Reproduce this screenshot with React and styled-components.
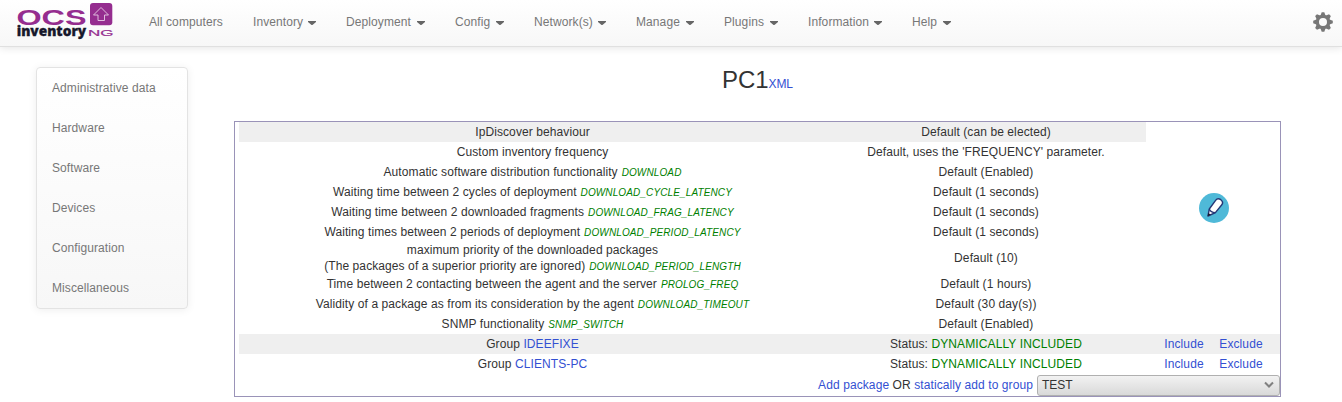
import React from 'react';
import styled, { createGlobalStyle } from 'styled-components';

const GlobalStyle = createGlobalStyle`
  * { box-sizing: border-box; }
  body {
    margin: 0;
    background: #fff;
    color: #333;
    font: 12px/16px "Liberation Sans", Arial, sans-serif;
    letter-spacing: 0.09px;
    overflow: hidden;
  }
  a { color: #3350d2; text-decoration: none; }
`;

const Header = styled.header`
  display: flex;
  align-items: flex-start;
  height: 47px;
  padding: 0 9px 0 16px;
  border-bottom: 1px solid #e0e0e0;
  background: linear-gradient(#fff, #f7f7f7);
  box-shadow: 0 1px 8px rgba(0, 0, 0, 0.11);
`;

const Logo = styled.svg`
  display: block;
  flex: none;
  width: 98px;
  height: 42px;
  margin-right: 20px;
  letter-spacing: 0;
`;

const Nav = styled.nav`
  display: flex;
  flex: 1;
`;

const NavItem = styled.a`
  display: flex;
  align-items: center;
  width: ${(p) => p.$width}px;
  height: 44px;
  padding-left: 15px;
  && { color: #777; }
  white-space: nowrap;
`;

const Caret = styled.span`
  width: 8px;
  height: 4px;
  margin: 2px 15px 0 auto;
  background: #666;
  clip-path: polygon(0 0, 100% 0, 100% 25%, 55% 100%, 45% 100%, 0 25%);
`;

const Gear = styled.svg`
  width: 20px;
  height: 20px;
  margin-top: 12px;
`;

const Page = styled.div`
  display: flex;
  align-items: flex-start;
  padding: 20px 61px 0 36px;
`;

const Sidebar = styled.aside`
  width: 152px;
  margin-right: 46px;
  border: 1px solid #e3e3e3;
  border-radius: 4px;
  background: linear-gradient(#fff, #f7f7f7);
  box-shadow: 0 1px 8px rgba(0, 0, 0, 0.07);
`;

const SideItem = styled.a`
  display: block;
  padding: 0 15px;
  line-height: 40px;
  && { color: #777; }
`;

const Main = styled.main`
  width: 1047px;
`;

const Title = styled.h1`
  display: flex;
  justify-content: center;
  align-items: baseline;
  height: 54px;
  margin: 0;
  font-size: 24px;
  font-weight: 400;
  line-height: 26px;
  letter-spacing: -0.1px;
  a { font-size: 12px; }
`;

const Panel = styled.section`
  display: grid;
  grid-template-columns: 587px 320px 76px 58px;
  grid-template-rows: repeat(6, 20px) 32px repeat(5, 20px) 22px;
  height: 276px;
  padding-left: 4px;
  border: 1px solid #9a93b8;
`;

const Cell = styled.div`
  grid-column: ${(p) => p.$col};
  grid-row: ${(p) => p.$row};
  display: flex;
  flex-direction: ${(p) => (p.$stacked ? 'column' : 'row')};
  align-items: center;
  justify-content: center;
  background: ${(p) => (p.$shaded ? '#efefef' : 'transparent')};
  text-align: center;
  white-space: nowrap;
`;

const EditCell = styled(Cell)`
  padding-left: 2px;
`;

const ExcludeCell = styled(Cell)`
  padding-right: 20px;
`;

const Label = styled.span`
  white-space: pre;
`;

const Option = styled.i`
  margin-left: 0.5px;
  color: #008000;
  font-size: 10px;
  line-height: 1;
  letter-spacing: 0.12px;
`;

const Status = styled.span`
  color: #008000;
  letter-spacing: 0.12px;
`;

const AddRow = styled.div`
  grid-column: 1 / -1;
  grid-row: 13;
  display: flex;
  align-items: center;
  justify-content: flex-end;
  gap: 4px;
`;

const Select = styled.button`
  display: flex;
  align-items: center;
  justify-content: space-between;
  width: 243px;
  height: 21px;
  padding: 0 5px 0 4px;
  border: 1px solid #b0b0b0;
  border-radius: 3px;
  background: linear-gradient(#f2f2f2, #d9d9d9);
  color: #333;
  font: inherit;
`;

const menu = [
  { text: 'All computers', width: 104, plain: true },
  { text: 'Inventory', width: 93 },
  { text: 'Deployment', width: 109 },
  { text: 'Config', width: 79 },
  { text: 'Network(s)', width: 102 },
  { text: 'Manage', width: 88 },
  { text: 'Plugins', width: 84 },
  { text: 'Information', width: 104 },
  { text: 'Help', width: 69 },
];

const sections = ['Administrative data', 'Hardware', 'Software', 'Devices', 'Configuration', 'Miscellaneous'];

const settings = [
  { lines: ['IpDiscover behaviour'], value: 'Default (can be elected)' },
  { lines: ['Custom inventory frequency'], value: "Default, uses the 'FREQUENCY' parameter." },
  { lines: ['Automatic software distribution functionality'], option: 'DOWNLOAD', value: 'Default (Enabled)' },
  { lines: ['Waiting time between 2 cycles of deployment'], option: 'DOWNLOAD_CYCLE_LATENCY', value: 'Default (1 seconds)' },
  { lines: ['Waiting time between 2 downloaded fragments'], option: 'DOWNLOAD_FRAG_LATENCY', value: 'Default (1 seconds)' },
  { lines: ['Waiting times between 2 periods of deployment'], option: 'DOWNLOAD_PERIOD_LATENCY', value: 'Default (1 seconds)' },
  {
    lines: ['maximum priority of the downloaded packages', '(The packages of a superior priority are ignored)'],
    option: 'DOWNLOAD_PERIOD_LENGTH',
    value: 'Default (10)',
  },
  { lines: ['Time between 2 contacting between the agent and the server'], option: 'PROLOG_FREQ', value: 'Default (1 hours)' },
  { lines: ['Validity of a package as from its consideration by the agent'], option: 'DOWNLOAD_TIMEOUT', value: 'Default (30 day(s))' },
  { lines: ['SNMP functionality'], option: 'SNMP_SWITCH', value: 'Default (Enabled)' },
];

const groups = ['IDEEFIXE', 'CLIENTS-PC'];

function OcsLogo() {
  return (
    <Logo viewBox="0 0 98 42">
      <text x="0.5" y="24.6" fontFamily="Liberation Sans" fontWeight="700" fontSize="21.5" fill="#952d8f" textLength="70" lengthAdjust="spacingAndGlyphs">OCS</text>
      <text x="0.7" y="36" fontFamily="Open Sans" fontWeight="800" fontSize="13.5" fill="#17182b" stroke="#17182b" strokeWidth=".3" textLength="69.5" lengthAdjust="spacingAndGlyphs">inventory</text>
      <text x="72" y="35.5" fontFamily="Liberation Sans" fontSize="9.5" fill="#952d8f" stroke="#952d8f" strokeWidth=".2" textLength="25.5" lengthAdjust="spacingAndGlyphs">NG</text>
      <rect x="74" y="3" width="22.3" height="22.3" rx="3" fill="#952d8f" />
      <path d="M85 7.5 L92.5 15 H88.5 V20.5 H82 V15 H77.5 Z" fill="none" stroke="#dfbddd" strokeWidth="1" />
    </Logo>
  );
}

function GearIcon() {
  const teeth = [0, 45, 90, 135, 180, 225, 270, 315];
  return (
    <Gear viewBox="-10 -10 20 20">
      {teeth.map((a) => (
        <path key={a} d="M-2.7 -6 L-1.3 -9.8 H1.3 L2.7 -6 Z" fill="#777" transform={`rotate(${a})`} />
      ))}
      <circle r="5.6" fill="none" stroke="#777" strokeWidth="3.2" />
    </Gear>
  );
}

function EditIcon() {
  return (
    <svg width="30" height="30" viewBox="0 0 30 30">
      <circle cx="15" cy="15" r="15" fill="#4fb9d8" />
      <path d="M10.3 16 L16.6 7.4 Q18.6 4.6 21.8 6.7 Q24.8 9 22.8 11.8 L16.4 19.6 L9 23 Z" fill="#fff" stroke="#243776" strokeWidth="1.4" strokeLinejoin="round" />
      <path d="M10.3 16 Q11.5 19.5 16.4 19.6" fill="none" stroke="#243776" strokeWidth="1.2" />
      <path d="M8.6 23.3 L9.3 20 L11.8 21.8 Z" fill="#1c1c2e" />
    </svg>
  );
}

export default function App() {
  return (
    <>
      <GlobalStyle />
      <Header>
        <OcsLogo />
        <Nav>
          {menu.map((m) => (
            <NavItem key={m.text} $width={m.width}>
              {m.text}
              {!m.plain && <Caret />}
            </NavItem>
          ))}
        </Nav>
        <GearIcon />
      </Header>
      <Page>
        <Sidebar>
          {sections.map((s) => <SideItem key={s}>{s}</SideItem>)}
        </Sidebar>
        <Main>
          <Title>PC1<a>XML</a></Title>
          <Panel>
            {settings.map(({ lines, option, value }, i) => (
              <React.Fragment key={lines[0]}>
                <Cell $col={1} $row={i + 1} $shaded={i === 0} $stacked>
                  {lines.map((line, n) => (
                    <Label key={line}>
                      {line}
                      {option && n === lines.length - 1 && <> <Option>{option}</Option></>}
                    </Label>
                  ))}
                </Cell>
                <Cell $col={2} $row={i + 1} $shaded={i === 0}>{value}</Cell>
              </React.Fragment>
            ))}
            <EditCell $col="3 / 5" $row="1 / 9"><EditIcon /></EditCell>
            {groups.map((g, i) => (
              <React.Fragment key={g}>
                <Cell $col={1} $row={11 + i} $shaded={i === 0}><Label>Group <a>{g}</a></Label></Cell>
                <Cell $col={2} $row={11 + i} $shaded={i === 0}><Label>Status: <Status>DYNAMICALLY INCLUDED</Status></Label></Cell>
                <Cell $col={3} $row={11 + i} $shaded={i === 0}><a>Include</a></Cell>
                <ExcludeCell $col={4} $row={11 + i} $shaded={i === 0}><a>Exclude</a></ExcludeCell>
              </React.Fragment>
            ))}
            <AddRow>
              <Label><a>Add package</a> OR <a>statically add to group</a></Label>
              <Select>
                TEST
                <svg width="10" height="8" viewBox="0 0 10 8"><path d="M1 1.5 L5 5.5 L9 1.5" fill="none" stroke="#808080" strokeWidth="2" /></svg>
              </Select>
            </AddRow>
          </Panel>
        </Main>
      </Page>
    </>
  );
}
